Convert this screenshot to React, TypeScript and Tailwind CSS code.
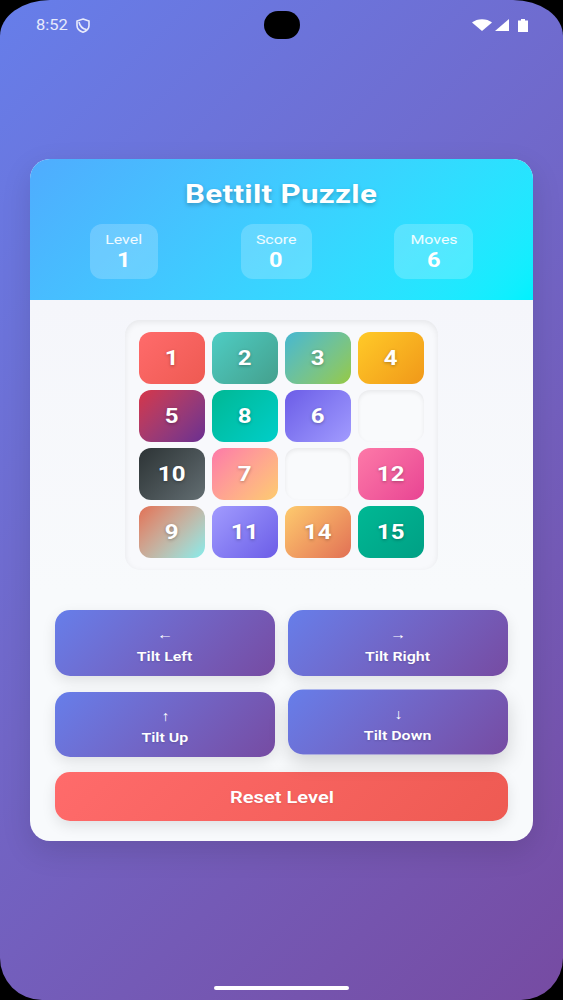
const tiles = [
  { n: '1', c: 'from-[#ff6b6b] to-[#ee5a52]' },
  { n: '2', c: 'from-[#4ecdc4] to-[#44a08d]' },
  { n: '3', c: 'from-[#45b7d1] to-[#96c93d]' },
  { n: '4', c: 'from-[#ffca28] to-[#f09819]' },
  { n: '5', c: 'from-[#d63447] to-[#6b2d91]' },
  { n: '8', c: 'from-[#00b894] to-[#00cec9]' },
  { n: '6', c: 'from-[#6c5ce7] to-[#a29bfe]' },
  { n: '', c: '' },
  { n: '10', c: 'from-[#2d3436] to-[#636e72]' },
  { n: '7', c: 'from-[#fd79a8] to-[#fdcb6e]' },
  { n: '', c: '' },
  { n: '12', c: 'from-[#fd79a8] to-[#e84393]' },
  { n: '9', c: 'from-[#e17055] to-[#81ecec]' },
  { n: '11', c: 'from-[#a29bfe] to-[#6c5ce7]' },
  { n: '14', c: 'from-[#fdcb6e] to-[#e17055]' },
  { n: '15', c: 'from-[#00b894] to-[#00a085]' },
]

const stats = [
  { label: 'Level', value: '1', w: 'w-[68px]' },
  { label: 'Score', value: '0', w: 'w-[71px]' },
  { label: 'Moves', value: '6', w: 'w-[79px]' },
]

function TiltButton({ arrow, label, raised }: { arrow: string; label: string; raised?: boolean }) {
  return (
    <button
      className={`h-[65.5px] rounded-[15px] bg-linear-135 from-[#667eea] to-[#764ba2] text-white flex flex-col items-center justify-center pt-[6px] ${
        raised ? '-translate-y-[2.5px] shadow-[0_8px_20px_rgba(0,0,0,0.16)]' : 'shadow-[0_5px_14px_rgba(0,0,0,0.1)]'
      }`}
    >
      <span className="inline-block scale-x-[1.15] text-[14px] leading-[19px] font-semibold">{arrow}</span>
      <span className="inline-block scale-x-[1.18] mt-[1.5px] text-[13.5px] leading-[21px] font-semibold [text-shadow:0_1px_2px_rgba(0,0,0,0.15)]">{label}</span>
    </button>
  )
}

export default function App() {
  return (
    <div className="w-[563px] h-[1000px] bg-black font-['Roboto',sans-serif] overflow-hidden">
      <div className="relative w-full h-full [border-radius:50px_50px_42px_42px/36px_36px_42px_42px] bg-linear-135 from-[#667eea] to-[#764ba2] flex flex-col">
        <div className="h-[50px] px-[36px] flex items-center justify-between text-white">
          <div className="flex items-center">
            <span className="inline-block origin-left scale-x-[1.1] text-[15px] text-white/85">8:52</span>
            <svg width="14" height="15" viewBox="0 0 14 15" fill="none" stroke="white" strokeOpacity="0.85" strokeWidth="1.6" className="ml-[11px]">
              <path d="M7 1 L13 3 V7.5 C13 10.8 10.5 13 7 14.2 C3.5 13 1 10.8 1 7.5 V3 Z" />
              <path d="M3 4 C4 9 7 11 10.5 11.5" />
            </svg>
          </div>
          <div className="flex items-center mr-[-1px]">
            <svg width="20" height="12" viewBox="0 0 20 12" fill="white"><path d="M0 3.5 C5 -1 15 -1 20 3.5 L10 12 Z" /></svg>
            <svg width="14" height="12" viewBox="0 0 14 12" fill="white" className="ml-[3px]"><path d="M14 0 V12 H0 Z" /></svg>
            <svg width="10" height="13" viewBox="0 0 10 13" fill="white" className="ml-[9px]"><path d="M3 0 H7 V1.5 H10 V13 H0 V1.5 H3 Z" /></svg>
          </div>
        </div>
        <div className="absolute top-[11px] left-[264px] w-[36px] h-[28px] rounded-full bg-black" />

        <div className="mt-[109px] mx-[30px] h-[682px] rounded-[20px] overflow-hidden bg-[#f8fafc] shadow-[0_10px_30px_rgba(0,0,0,0.12)]">
          <div className="h-[141px] bg-linear-135 from-[#4facfe] to-[#00f2fe] pt-[18px] text-white">
            <h1 className="text-center">
              <span className="inline-block scale-x-[1.2] text-[26px] leading-[34px] font-bold tracking-[0.3px] [text-shadow:0_2px_4px_rgba(0,0,0,0.25)]">Bettilt Puzzle</span>
            </h1>
            <div className="mt-[13px] px-[60px] flex justify-between">
              {stats.map(s => (
                <div key={s.label} className={`${s.w} h-[55px] rounded-[12px] bg-white/20 flex flex-col items-center pt-[7px]`}>
                  <span className="inline-block scale-x-[1.18] text-[13.5px] leading-[16px] text-white/90">{s.label}</span>
                  <span className="inline-block scale-x-[1.18] text-[20px] leading-[26px] font-bold">{s.value}</span>
                </div>
              ))}
            </div>
          </div>

          <div className="h-[290px] pt-[20px] bg-gradient-to-b from-[#f5f6fb] to-[#f8fafc]">
            <div className="mx-auto w-[313px] h-[250px] rounded-[15px] bg-[#f8f9fc] p-[12px_14px] grid grid-cols-4 grid-rows-4 gap-x-[7.3px] gap-y-[6px] shadow-[inset_0_2px_6px_rgba(0,0,0,0.08)]">
              {tiles.map((t, i) =>
                t.n ? (
                  <div
                    key={i}
                    className={`rounded-[12px] bg-linear-135 ${t.c} flex items-center justify-center text-white`}
                  >
                    <span className="inline-block scale-x-[1.2] text-[20px] leading-[26px] mb-[1px] font-bold tracking-[0.3px] [text-shadow:0_1px_3px_rgba(0,0,0,0.3)]">{t.n}</span>
                  </div>
                ) : (
                  <div key={i} className="rounded-[12px] bg-[#f9fafc] shadow-[inset_0_2px_4px_rgba(0,0,0,0.07)]" />
                ),
              )}
            </div>
          </div>

          <div className="px-[25px] pt-[20px]">
            <div className="grid grid-cols-2 gap-x-[13px] gap-y-[16px]">
              <TiltButton arrow="←" label="Tilt Left" />
              <TiltButton arrow="→" label="Tilt Right" />
              <TiltButton arrow="↑" label="Tilt Up" />
              <TiltButton arrow="↓" label="Tilt Down" raised />
            </div>
            <button className="mt-[15px] w-full h-[49px] rounded-[15px] bg-linear-135 from-[#ff6b6b] to-[#ee5a52] text-white shadow-[0_5px_14px_rgba(0,0,0,0.1)]">
              <span className="inline-block scale-x-[1.18] text-[17px] leading-[26px] mt-[1px] font-semibold [text-shadow:0_1px_2px_rgba(0,0,0,0.1)]">Reset Level</span>
            </button>
          </div>
        </div>

        <div className="absolute left-[214px] bottom-[10px] w-[135px] h-[4px] rounded-full bg-white" />
      </div>
    </div>
  )
}
